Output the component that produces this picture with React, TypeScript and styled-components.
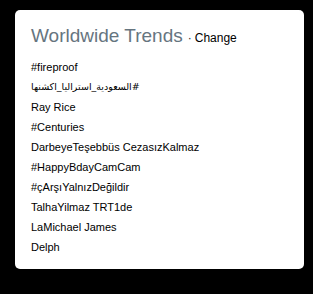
import React from "react";
import styled, { createGlobalStyle } from "styled-components";

const Global = createGlobalStyle`
  html, body {
    margin: 0;
    padding: 0;
    background: #000;
  }
  body {
    width: 313px;
    height: 294px;
    overflow: hidden;
  }
`;

const Page = styled.div`
  padding: 10px 0 0 15px;
`;

const Card = styled.section`
  box-sizing: border-box;
  width: 289px;
  height: 259px;
  background: #fff;
  border-radius: 5px;
  padding: 14px 16px 14px 16px;
  font-family: "Liberation Sans", Arial, sans-serif;
`;

const Header = styled.div`
  display: flex;
  align-items: baseline;
  line-height: 24px;
  margin-bottom: 7px;
  white-space: nowrap;
`;

const Title = styled.h3`
  margin: 0;
  font-size: 19px;
  font-weight: normal;
  color: #66757f;
`;

const Dot = styled.span`
  font-size: 12px;
  color: #292f33;
  margin: 0 3px 0 5px;
`;

const ChangeLink = styled.a`
  font-size: 12px;
  color: #000;
  text-decoration: none;
`;

const List = styled.ul`
  list-style: none;
  margin: 0;
  padding: 0;
`;

const Item = styled.li<{ $rtl?: boolean }>`
  font-size: ${(p) => (p.$rtl ? "9.5px" : "11px")};
  line-height: 20px;
  color: #000;
  text-align: left;
  white-space: nowrap;
  font-family: ${(p) =>
    p.$rtl ? '"DejaVu Sans", "Liberation Sans", sans-serif' : '"Liberation Sans", Arial, sans-serif'};
`;

const w1 = "السعودية";
const w2 = "استراليا";
const w3 = "اكشنها";

const trends: { text: string; rtl?: boolean }[] = [
  { text: "#fireproof" },
  { text: "#" + w1 + "_" + w2 + "_" + w3, rtl: true },
  { text: "Ray Rice" },
  { text: "#Centuries" },
  { text: "DarbeyeTeşebbüs CezasızKalmaz" },
  { text: "#HappyBdayCamCam" },
  { text: "#çArşıYalnızDeğildir" },
  { text: "TalhaYilmaz TRT1de" },
  { text: "LaMichael James" },
  { text: "Delph" },
];

export default function App() {
  return (
    <>
      <Global />
      <Page>
        <Card>
          <Header>
            <Title>Worldwide Trends</Title>
            <Dot>·</Dot>
            <ChangeLink href="#">Change</ChangeLink>
          </Header>
          <List>
            {trends.map((t) => (
              <Item key={t.text} $rtl={t.rtl} dir={t.rtl ? "rtl" : undefined}>
                {t.text}
              </Item>
            ))}
          </List>
        </Card>
      </Page>
    </>
  );
}
